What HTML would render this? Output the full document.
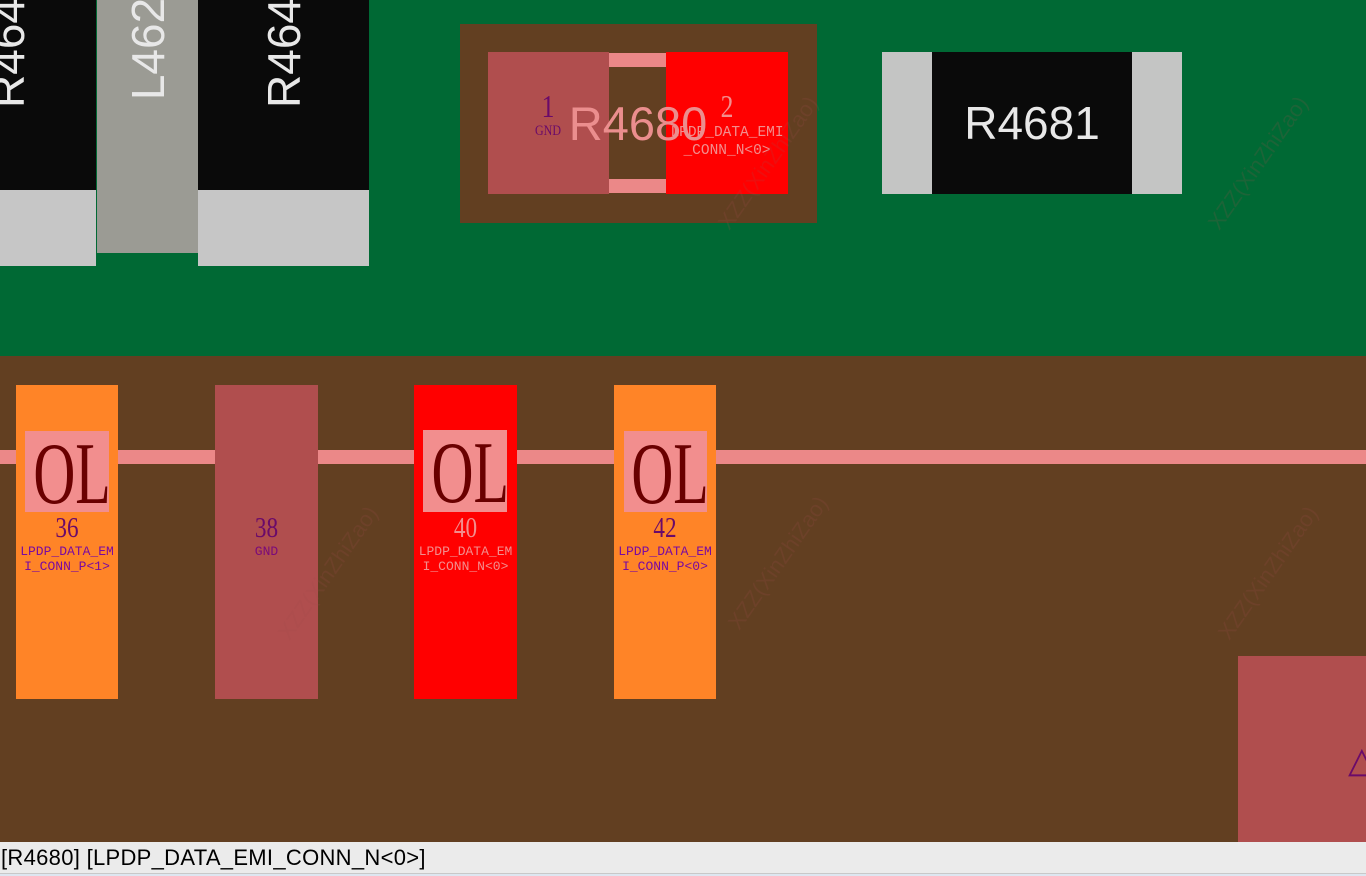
<!DOCTYPE html>
<html><head><meta charset="utf-8"><style>
*{margin:0;padding:0;box-sizing:border-box}
body{width:1366px;height:876px;overflow:hidden;position:relative;background:#623f21;font-family:"Liberation Sans",sans-serif}
div{position:absolute}
.t{white-space:nowrap;text-align:center;line-height:1}
.serif{font-family:"Liberation Serif","DejaVu Serif",serif}
.mono{font-family:"Liberation Mono",monospace}
.wm{color:rgba(160,80,80,0.18);font-size:22px;transform:rotate(-55deg);white-space:nowrap}
.ol{transform:scaleX(0.66)}
.num{transform:scaleX(0.8)}
</style></head><body>
<div style="left:0;top:0;width:1366px;height:356px;background:#006934"></div>
<div style="left:0;top:0;width:96px;height:190px;background:#0a0a0a"></div>
<div style="left:0;top:190px;width:96px;height:76px;background:#c6c6c6"></div>
<div style="left:97px;top:0;width:101px;height:253px;background:#9b9b94"></div>
<div style="left:198px;top:0;width:171px;height:190px;background:#0a0a0a"></div>
<div style="left:198px;top:190px;width:171px;height:76px;background:#c6c6c6"></div>
<div class="t" style="left:-52px;top:30px;width:120px;font-size:46px;color:#e8e8e8;transform:rotate(-90deg)">R464</div>
<div class="t" style="left:88px;top:26px;width:120px;font-size:46px;color:#e8e8e8;transform:rotate(-90deg)">L462</div>
<div class="t" style="left:224px;top:30px;width:120px;font-size:46px;color:#e8e8e8;transform:rotate(-90deg)">R464</div>
<div style="left:460px;top:24px;width:357px;height:199px;background:#623f21"></div>
<div style="left:609px;top:53px;width:57px;height:14px;background:#eb8888"></div>
<div style="left:609px;top:179px;width:57px;height:14px;background:#eb8888"></div>
<div style="left:488px;top:52px;width:121px;height:142px;background:#b04e4e"></div>
<div style="left:666px;top:52px;width:122px;height:142px;background:#ff0000"></div>
<div class="t serif num" style="left:528px;top:90px;width:40px;font-size:32px;color:#6a0a6a">1</div>
<div class="t serif num" style="left:518px;top:124px;width:60px;font-size:15px;color:#6a0a6a">GND</div>
<div class="t serif num" style="left:707px;top:90px;width:40px;font-size:32px;color:#f28e8e">2</div>
<div class="t mono" style="left:656px;top:124px;width:142px;font-size:14.5px;color:#f28e8e;line-height:18px">LPDP_DATA_EMI<br>_CONN_N&lt;0&gt;</div>
<div class="t" style="left:558px;top:100px;width:160px;font-size:47px;color:#eb8e8e">R4680</div>
<div style="left:882px;top:52px;width:300px;height:142px;background:#c4c5c4"></div>
<div style="left:932px;top:52px;width:200px;height:142px;background:#0a0a0a"></div>
<div class="t" style="left:932px;top:100px;width:200px;font-size:46px;color:#e8e8e8">R4681</div>
<div style="left:0;top:450px;width:1366px;height:14px;background:#eb8888"></div>
<div style="left:16px;top:385px;width:102px;height:314px;background:#ff8427"></div>
<div style="left:215px;top:385px;width:103px;height:314px;background:#b04e4e"></div>
<div style="left:414px;top:385px;width:103px;height:314px;background:#ff0000"></div>
<div style="left:614px;top:385px;width:102px;height:314px;background:#ff8427"></div>
<div style="left:25px;top:431px;width:84px;height:81px;background:#f28e8e"></div>
<div style="left:423px;top:430px;width:84px;height:82px;background:#f28e8e"></div>
<div style="left:624px;top:431px;width:83px;height:81px;background:#f28e8e"></div>
<div class="t serif ol" style="left:16px;top:431px;width:102px;font-size:88px;color:#6a0000">OL</div>
<div class="t serif ol" style="left:414px;top:430px;width:103px;font-size:88px;color:#6a0000">OL</div>
<div class="t serif ol" style="left:614px;top:431px;width:102px;font-size:88px;color:#6a0000">OL</div>
<div class="t serif num" style="left:16px;top:514px;width:102px;font-size:29px;color:#6a0a6a">36</div>
<div class="t serif num" style="left:215px;top:514px;width:103px;font-size:29px;color:#6a0a6a">38</div>
<div class="t serif num" style="left:414px;top:514px;width:103px;font-size:29px;color:#f28e8e">40</div>
<div class="t serif num" style="left:614px;top:514px;width:102px;font-size:29px;color:#6a0a6a">42</div>
<div class="t mono" style="left:12px;top:544px;width:110px;font-size:13px;line-height:15px;color:#7a0aa0">LPDP_DATA_EM<br>I_CONN_P&lt;1&gt;</div>
<div class="t mono" style="left:215px;top:544px;width:103px;font-size:13px;line-height:15px;color:#7a0a7a">GND</div>
<div class="t mono" style="left:410px;top:544px;width:111px;font-size:13px;line-height:15px;color:#f28e8e">LPDP_DATA_EM<br>I_CONN_N&lt;0&gt;</div>
<div class="t mono" style="left:610px;top:544px;width:110px;font-size:13px;line-height:15px;color:#7a0aa0">LPDP_DATA_EM<br>I_CONN_P&lt;0&gt;</div>
<div style="left:1238px;top:656px;width:128px;height:186px;background:#b04e4e"></div>
<div class="t" style="left:1348px;top:742px;font-size:36px;color:#6a0a6a">△</div>
<div class="wm" style="left:690px;top:150px">XZZ(XinZhiZao)</div>
<div class="wm" style="left:1180px;top:150px">XZZ(XinZhiZao)</div>
<div class="wm" style="left:250px;top:560px">XZZ(XinZhiZao)</div>
<div class="wm" style="left:700px;top:550px">XZZ(XinZhiZao)</div>
<div class="wm" style="left:1190px;top:560px">XZZ(XinZhiZao)</div>
<div style="left:0;top:842px;width:1366px;height:34px;background:#ebebeb"></div>
<div style="left:0;top:873px;width:1366px;height:3px;background:#dde6f0;border-top:1px solid #c8c8c8"></div>
<div style="left:1px;top:845px;font-size:22px;letter-spacing:0.3px;color:#000;white-space:nowrap">[R4680] [LPDP_DATA_EMI_CONN_N&lt;0&gt;]</div>
</body></html>
